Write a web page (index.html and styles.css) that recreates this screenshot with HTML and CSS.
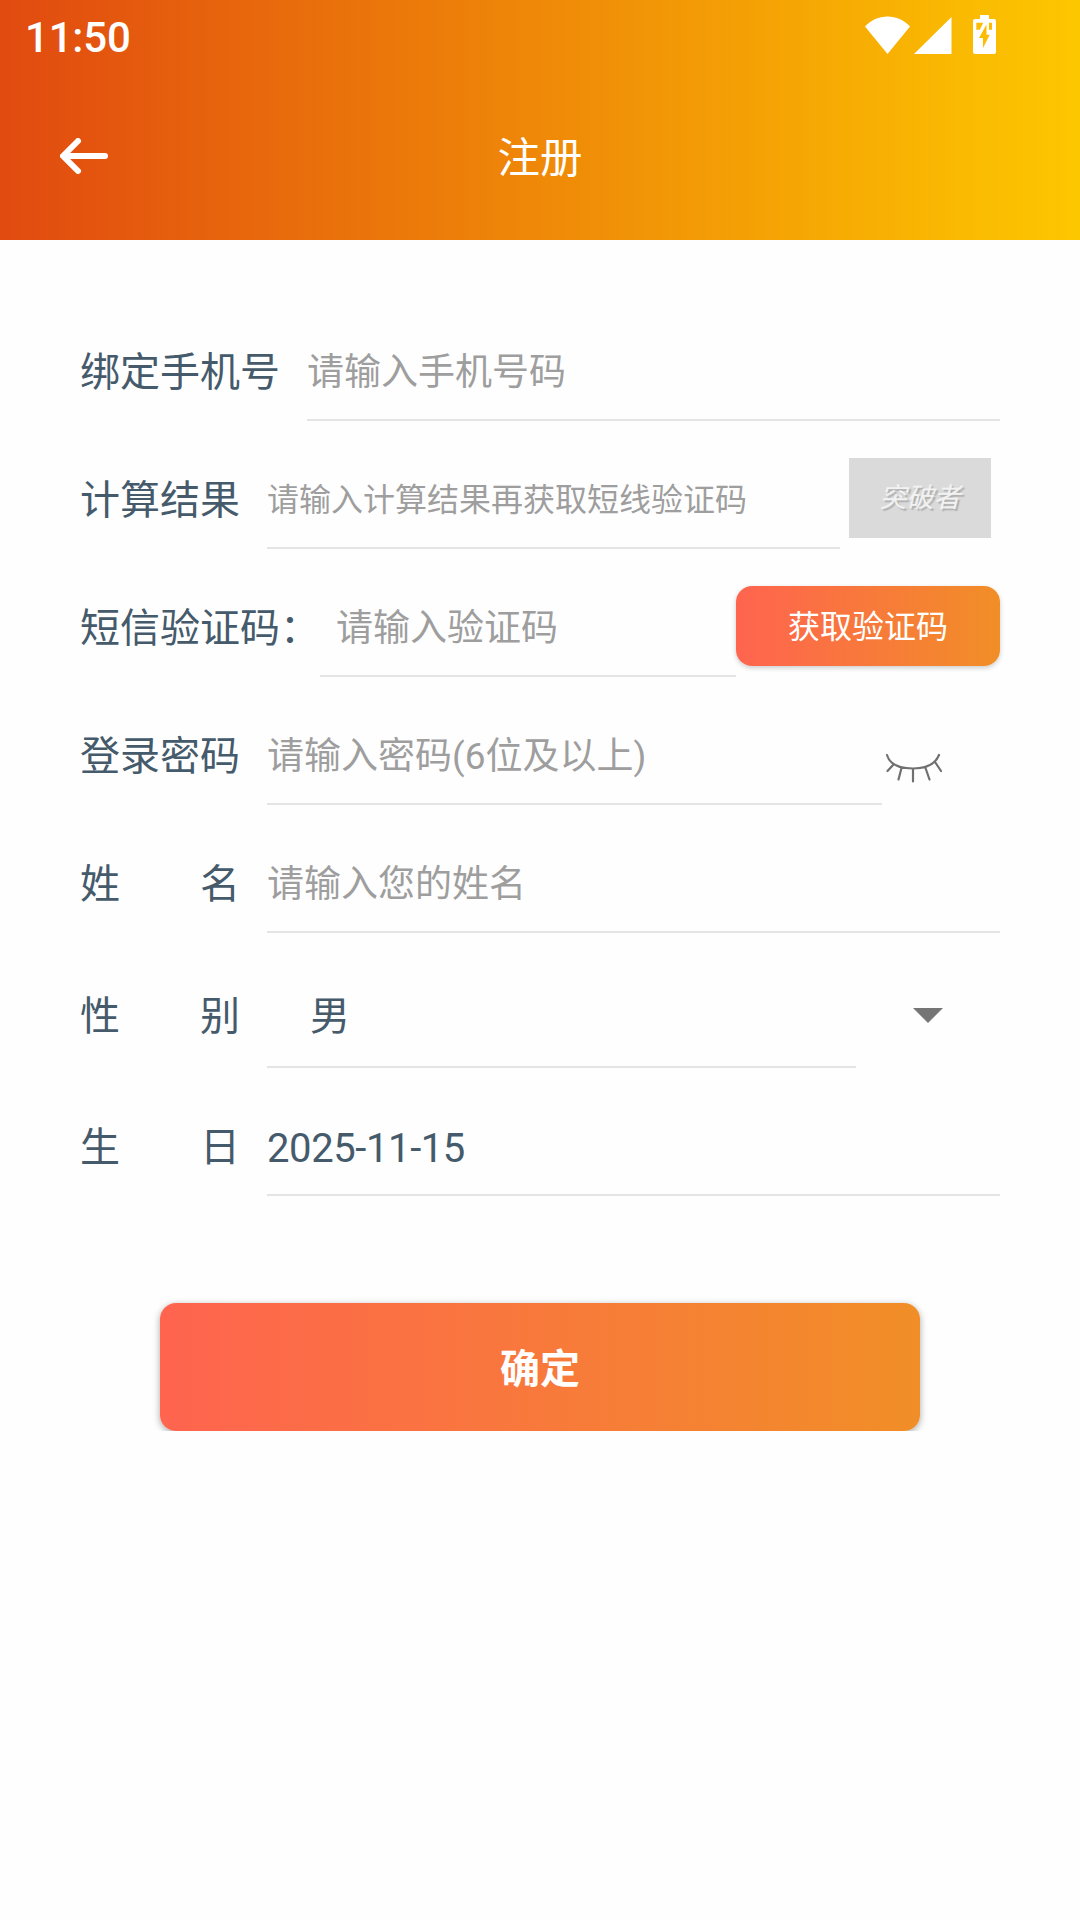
FILE: index.html
```html
<!DOCTYPE html>
<html lang="zh-CN">
<head>
    <meta charset="UTF-8">
    <meta name="viewport" content="width=device-width, initial-scale=1.0">
    <title>注册</title>
    <link rel="stylesheet" href="styles.css">
</head>
<body>
    <header class="header">
        <div class="status-bar">
            <span class="clock">11:50</span>
            <svg class="status-icons" width="132" height="40" viewBox="0 0 132 40">
                <path d="M0 11.500C6 5 14 1.500 22.500 1.500S39 5 45 11.500L22.500 39Z"/>
                <path d="M86.500 2V39H49Z"/>
                <path fill-rule="evenodd" d="M115 0h9v4h5a2 2 0 0 1 2 2v31a2 2 0 0 1-2 2h-19a2 2 0 0 1-2-2V6a2 2 0 0 1 2-2h5zM111.300 7.700v7h3.400l3.600-7zM121.500 9.500L114 23h4v10l6.700-13.300h-3.200zM124 7.700v7h3v-7z"/>
            </svg>
        </div>
        <div class="nav-bar">
            <svg class="back" width="48" height="36" viewBox="0 0 48 36">
                <path d="M18 3L3 18L18 33M4 18H45"/>
            </svg>
            <h1 class="title">注册</h1>
        </div>
    </header>

    <form class="form">
        <div class="row">
            <label class="label">绑定手机号</label>
            <div class="field placeholder">请输入手机号码</div>
        </div>
        <div class="row">
            <label class="label">计算结果</label>
            <div class="field placeholder small">请输入计算结果再获取短线验证码</div>
            <div class="captcha">突破者</div>
        </div>
        <div class="row">
            <label class="label label-sms">短信验证码：</label>
            <div class="field placeholder field-sms">请输入验证码</div>
            <button type="button" class="btn btn-code">获取验证码</button>
        </div>
        <div class="row">
            <label class="label">登录密码</label>
            <div class="field placeholder">请输入密码(6位及以上)</div>
            <div class="eye">
                <svg width="58" height="32" viewBox="0 0 58 32">
                    <path d="M3 3C5.500 12 15.500 16.500 29 16.500S51.500 12 55 3M9.500 12.500L3.500 19M17.500 16L14.500 27.500M29 17V29.500M41.500 16L45.500 27.500M51 10L57 19"/>
                </svg>
            </div>
        </div>
        <div class="row">
            <label class="label">姓　　名</label>
            <div class="field placeholder">请输入您的姓名</div>
        </div>
        <div class="row row-sex">
            <label class="label">性　　别</label>
            <div class="field field-sex">男</div>
            <div class="dropdown"><span class="caret"></span></div>
        </div>
        <div class="row">
            <label class="label">生　　日</label>
            <div class="field field-date">2025-11-15</div>
        </div>
    </form>

    <div class="submit-wrap">
        <button type="button" class="btn btn-submit">确定</button>
    </div>
</body>
</html>
```
FILE: styles.css
```css
* {
    box-sizing: border-box;
}

body {
    margin: 0;
    min-height: 1920px;
    background: #fefefe;
    color: #455a6b;
    font-family: Roboto, "Noto Sans CJK SC", sans-serif;
}

.header {
    height: 240px;
    background: linear-gradient(90deg, #e14a10, #fdc700);
    color: #fff;
}

.status-bar {
    display: flex;
    justify-content: space-between;
    height: 72px;
    padding: 15px 83px 0 25px;
}

.clock {
    font-size: 42px;
    font-weight: 500;
    line-height: 46px;
    letter-spacing: -0.2px;
}

.status-icons {
    fill: #fff;
}

.nav-bar {
    display: grid;
    grid-template-columns: 60px 1fr 60px;
    align-items: center;
    height: 168px;
    padding: 0 60px;
}

.back {
    fill: none;
    stroke: #fff;
    stroke-width: 6;
    stroke-linecap: round;
    stroke-linejoin: round;
}

.title {
    margin: 0;
    padding-top: 5px;
    font-size: 42.5px;
    font-weight: 400;
    line-height: 60px;
    text-align: center;
}

.form {
    display: flex;
    flex-direction: column;
    gap: 30px;
    padding: 83px 80px 0;
}

.row {
    display: flex;
    height: 98px;
}

.row-sex {
    height: 105px;
}

.label {
    display: flex;
    align-items: center;
    flex: none;
    margin-right: 27px;
    padding-bottom: 7px;
    font-size: 40px;
}

.row-sex .label {
    padding-bottom: 5px;
}

.label-sms {
    margin-right: 0;
}

.field {
    display: flex;
    align-items: center;
    flex: 1;
    border-bottom: 2px solid #e4e4e4;
    font-size: 40px;
    white-space: nowrap;
}

.placeholder {
    padding-bottom: 5px;
    color: #9e9e9e;
    font-size: 37px;
}

.small {
    font-size: 32px;
}

.field-sms {
    padding-left: 16px;
}

.field-sex {
    padding: 0 0 3px 43px;
}

.field-date {
    padding-top: 4px;
    letter-spacing: -0.4px;
}

.captcha {
    width: 142px;
    height: 80px;
    margin: 7px 9px 0;
    background: #dadada;
    color: #f2f2f2;
    font-size: 27px;
    font-style: italic;
    line-height: 80px;
    text-align: center;
    text-shadow: 2px 2px 1px #b0b0b0;
}

.eye {
    width: 118px;
    padding: 45px 0 0 2px;
}

.eye svg {
    display: block;
    fill: none;
    stroke: #707070;
    stroke-width: 2.2;
    stroke-linecap: round;
}

.dropdown {
    width: 144px;
    padding: 45px 0 0 57px;
}

.caret {
    display: block;
    width: 30px;
    height: 15px;
    background: #757575;
    clip-path: polygon(0 0, 100% 0, 50% 100%);
}

.btn {
    padding: 0;
    border: 0;
    border-radius: 16px;
    background: linear-gradient(90deg, #ff644f, #f18e27);
    color: #fff;
    font-family: inherit;
}

.btn-code {
    width: 264px;
    height: 80px;
    margin-top: 7px;
    padding-bottom: 4px;
    font-size: 32px;
    box-shadow: 0 2px 5px rgba(0, 0, 0, 0.2);
}

.submit-wrap {
    margin-top: 97px;
    padding: 10px 160px 0;
    overflow: hidden;
}

.btn-submit {
    display: block;
    width: 760px;
    height: 128px;
    padding-bottom: 2px;
    font-size: 40px;
    font-weight: 700;
    box-shadow: 0 2px 7px rgba(0, 0, 0, 0.35);
}
```
